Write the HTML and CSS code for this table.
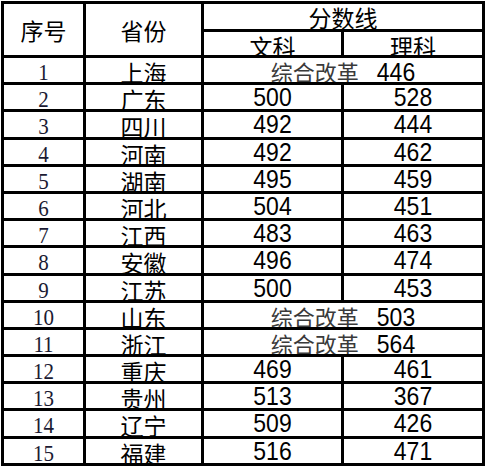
FILE: index.html
```html
<!DOCTYPE html>
<html lang="zh">
<head>
<meta charset="utf-8">
<title>分数线</title>
<link rel="stylesheet" href="styles.css">
</head>
<body>
<div class="sheet">
  <div class="c head span2">序号</div>
  <div class="c head span2">省份</div>
  <div class="c head top">分数线</div>
  <div class="c head sub">文科</div>
  <div class="c head sub">理科</div>

  <div class="c n"><span class="d">1</span></div><div class="c p">上海</div><div class="c m"><span class="mt">综合改革</span><span class="d mv">446</span></div>
  <div class="c n"><span class="d">2</span></div><div class="c p">广东</div><div class="c v"><span class="d">500</span></div><div class="c v"><span class="d">528</span></div>
  <div class="c n"><span class="d">3</span></div><div class="c p">四川</div><div class="c v"><span class="d">492</span></div><div class="c v"><span class="d">444</span></div>
  <div class="c n"><span class="d">4</span></div><div class="c p">河南</div><div class="c v"><span class="d">492</span></div><div class="c v"><span class="d">462</span></div>
  <div class="c n"><span class="d">5</span></div><div class="c p">湖南</div><div class="c v"><span class="d">495</span></div><div class="c v"><span class="d">459</span></div>
  <div class="c n"><span class="d">6</span></div><div class="c p">河北</div><div class="c v"><span class="d">504</span></div><div class="c v"><span class="d">451</span></div>
  <div class="c n"><span class="d">7</span></div><div class="c p">江西</div><div class="c v"><span class="d">483</span></div><div class="c v"><span class="d">463</span></div>
  <div class="c n"><span class="d">8</span></div><div class="c p">安徽</div><div class="c v"><span class="d">496</span></div><div class="c v"><span class="d">474</span></div>
  <div class="c n"><span class="d">9</span></div><div class="c p">江苏</div><div class="c v"><span class="d">500</span></div><div class="c v"><span class="d">453</span></div>
  <div class="c n"><span class="d">10</span></div><div class="c p">山东</div><div class="c m"><span class="mt">综合改革</span><span class="d mv">503</span></div>
  <div class="c n"><span class="d">11</span></div><div class="c p">浙江</div><div class="c m"><span class="mt">综合改革</span><span class="d mv">564</span></div>
  <div class="c n"><span class="d">12</span></div><div class="c p">重庆</div><div class="c v"><span class="d">469</span></div><div class="c v"><span class="d">461</span></div>
  <div class="c n"><span class="d">13</span></div><div class="c p">贵州</div><div class="c v"><span class="d">513</span></div><div class="c v"><span class="d">367</span></div>
  <div class="c n"><span class="d">14</span></div><div class="c p">辽宁</div><div class="c v"><span class="d">509</span></div><div class="c v"><span class="d">426</span></div>
  <div class="c n"><span class="d">15</span></div><div class="c p">福建</div><div class="c v"><span class="d">516</span></div><div class="c v"><span class="d">471</span></div>
</div>
</body>
</html>
```

FILE: styles.css
```css
html, body {
  margin: 0;
  background: #fff;
}

.sheet {
  display: grid;
  grid-template-columns: 79px 115px 137px 138px;
  grid-template-rows: 25px 23px repeat(15, 24.2px);
  gap: 3px;
  padding: 3px;
  margin: 1px;
  width: max-content;
  background: #000;
}

.c {
  background: #fff;
  overflow: hidden;
  text-align: center;
  white-space: nowrap;
  color: #000;
  box-sizing: border-box;
}

.head {
  font-family: "Noto Sans CJK SC", sans-serif;
  font-size: 23px;
  line-height: 24px;
}

.span2 {
  grid-row: span 2;
  display: flex;
  align-items: center;
  justify-content: center;
}

.top {
  grid-column: span 2;
  padding-top: 1px;
}

.sub {
  padding-top: 2px;
}

.d {
  display: inline-block;
  transform: scaleY(1.12);
  transform-origin: 50% 85%;
}

.n {
  font-family: "Liberation Serif", "Times New Roman", serif;
  font-size: 21px;
  line-height: 24px;
  padding-top: 3px;
  color: #1b1b33;
}

.p {
  font-family: "Noto Sans CJK SC", sans-serif;
  font-size: 23px;
  line-height: 24px;
  padding-top: 2px;
}

.v {
  font-family: "Liberation Sans", Arial, sans-serif;
  font-size: 23px;
  line-height: 24px;
  padding-top: 1px;
}

.m {
  grid-column: span 2;
  line-height: 24px;
  padding-top: 1px;
}

.mt {
  font-family: "Noto Sans CJK SC", sans-serif;
  font-size: 22px;
  color: #3a3a3a;
}

.mv {
  font-family: "Liberation Sans", Arial, sans-serif;
  font-size: 23px;
  margin-left: 18px;
}
```
